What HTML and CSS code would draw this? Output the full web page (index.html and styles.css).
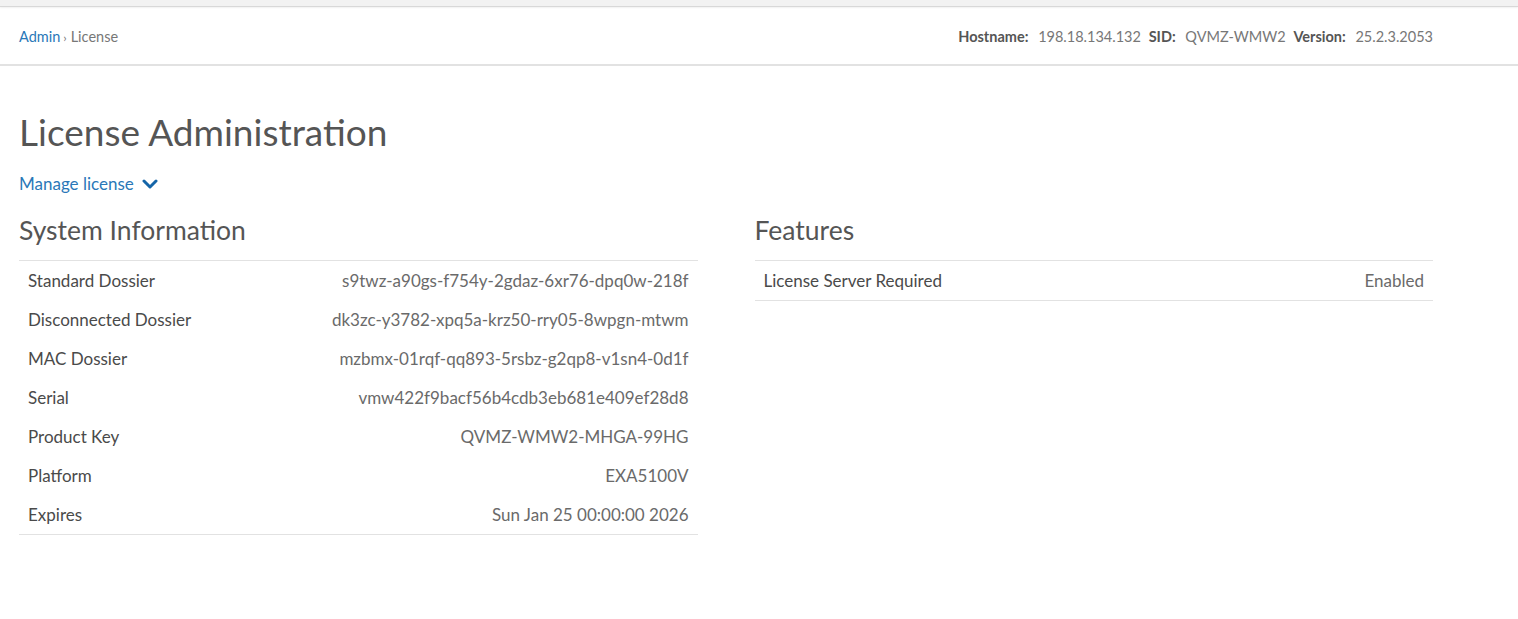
FILE: index.html
```html
<!DOCTYPE html>
<html lang="en">
<head>
    <meta charset="UTF-8">
    <meta name="viewport" content="width=device-width, initial-scale=1.0">
    <title>License Administration</title>
    <link rel="stylesheet" href="styles.css">
</head>
<body>
    <div class="top-strip"></div>
    <header class="page-header">
        <nav class="breadcrumb">
            <a href="#">Admin</a><span class="sep">›</span><span>License</span>
        </nav>
        <div class="sys-meta">
            <strong>Hostname:</strong> <span>198.18.134.132</span>
            <strong>SID:</strong> <span>QVMZ-WMW2</span>
            <strong>Version:</strong> <span>25.2.3.2053</span>
        </div>
    </header>
    <main class="content">
        <h1>License Administration</h1>
        <a href="#" class="manage-link">Manage license
            <svg width="16" height="12" viewBox="0 0 16 12" aria-hidden="true">
                <path d="M2 3 L8 9 L14 3" fill="none" stroke="currentColor" stroke-width="3" stroke-linecap="round" stroke-linejoin="round"/>
            </svg>
        </a>
        <div class="columns">
            <section>
                <h2>System Information</h2>
                <table class="info-table">
                    <tr><td>Standard Dossier</td><td>s9twz-a90gs-f754y-2gdaz-6xr76-dpq0w-218f</td></tr>
                    <tr><td>Disconnected Dossier</td><td>dk3zc-y3782-xpq5a-krz50-rry05-8wpgn-mtwm</td></tr>
                    <tr><td>MAC Dossier</td><td>mzbmx-01rqf-qq893-5rsbz-g2qp8-v1sn4-0d1f</td></tr>
                    <tr><td>Serial</td><td>vmw422f9bacf56b4cdb3eb681e409ef28d8</td></tr>
                    <tr><td>Product Key</td><td>QVMZ-WMW2-MHGA-99HG</td></tr>
                    <tr><td>Platform</td><td>EXA5100V</td></tr>
                    <tr><td>Expires</td><td>Sun Jan 25 00:00:00 2026</td></tr>
                </table>
            </section>
            <section>
                <h2>Features</h2>
                <table class="info-table">
                    <tr><td>License Server Required</td><td>Enabled</td></tr>
                </table>
            </section>
        </div>
    </main>
</body>
</html>
```

FILE: styles.css
```css
body {
    font-family: Lato, "Open Sans", sans-serif;
    margin: 0;
    padding: 0;
    color: #555;
    background: #fff;
}

a {
    color: #2a78b8;
    text-decoration: none;
}

.top-strip {
    height: 6px;
    background-color: #f2f2f2;
    border-bottom: 1px solid #d8d8d8;
    box-shadow: 0 1px 2px rgba(0, 0, 0, 0.06);
}

.page-header {
    display: flex;
    justify-content: space-between;
    align-items: center;
    height: 55px;
    padding: 2px 85px 0 19px;
    border-bottom: 2px solid #e2e2e2;
    font-size: 14.5px;
}

.breadcrumb {
    color: #777;
}

.breadcrumb .sep {
    margin: 0 4px 0 3px;
    font-size: 12px;
}

.sys-meta {
    color: #777;
}

.sys-meta strong {
    color: #555;
    margin-left: 4px;
}

.sys-meta strong:first-child {
    margin-left: 0;
}

.sys-meta span {
    margin-left: 6px;
}

.content {
    padding: 42px 85px 0 19px;
}

h1 {
    font-size: 37px;
    font-weight: 400;
    margin: 0 0 18px;
    line-height: 48px;
    color: #555;
}

.manage-link {
    display: inline-flex;
    align-items: center;
    gap: 8px;
    font-size: 17px;
    line-height: 20px;
}

.manage-link svg {
    color: #1565a8;
}

.columns {
    display: grid;
    grid-template-columns: 1fr 1fr;
    gap: 57px;
    margin-top: 18px;
}

h2 {
    font-size: 26.5px;
    font-weight: 400;
    margin: 0 0 12px;
    line-height: 36px;
    color: #555;
}

.info-table {
    width: 100%;
    border-collapse: collapse;
    border-top: 1px solid #e2e2e2;
    border-bottom: 1px solid #e2e2e2;
    font-size: 17px;
}

.info-table td {
    height: 39px;
    padding: 0 9px;
    vertical-align: middle;
}

.info-table td:first-child {
    color: #4a4a4a;
}

.info-table td:last-child {
    text-align: right;
    color: #6a6a6a;
}
```
